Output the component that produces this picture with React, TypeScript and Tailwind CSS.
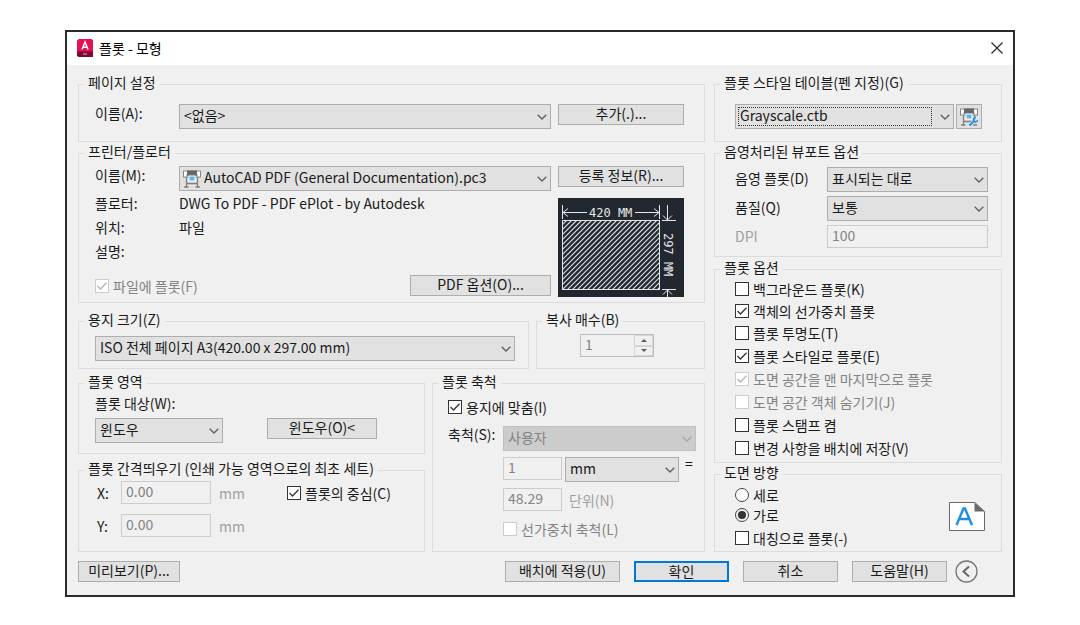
import { useState } from "react";
import type { ReactNode } from "react";
import clsx from "clsx";

type SelectProps = {
  id?: string;
  label?: string;
  options: string[];
  className?: string;
  disabled?: boolean;
  focused?: boolean;
  icon?: ReactNode;
};

const Chevron = ({ className }: { className: string }) => (
  <svg viewBox="0 0 10 6" className={className} fill="none" aria-hidden="true">
    <path d="M0.7 0.7 L5 5 L9.3 0.7" stroke="currentColor" strokeWidth="1.3" />
  </svg>
);

const PlotterIcon = ({ wrench = false }: { wrench?: boolean }) => (
  <svg viewBox="0 0 18 18" className="h-[18px] w-[18px]" fill="none" aria-hidden="true">
    <rect x="0.5" y="1" width="17" height="6" fill="#fff" stroke="#858585" />
    <rect x="4" y="0.5" width="10" height="4.500" fill="#666" />
    <path d="M3.500 5.500h11" stroke="#777" strokeWidth="1.600" />
    <path d="M3.500 7v10M14.500 7v10M1 17h4.500M12.500 17h4.500M3.500 13.500h11" stroke="#808080" strokeWidth="1.300" />
    <rect x="6" y="6" width="6" height="5" fill="#5ab4f0" stroke="#fff" />
    {wrench && (
      <>
        <path d="M10 17.500l5-5" stroke="#e1e1e1" strokeWidth="4" />
        <path d="M9.500 17.500l5-5" stroke="#2b93e6" strokeWidth="2.200" />
        <path d="M16 9.500a2.200 2.200 0 1 0 1.800 2.500" stroke="#2b93e6" strokeWidth="1.600" />
      </>
    )}
  </svg>
);

const Select = ({ id, label, options, className, disabled, focused, icon }: SelectProps) => (
  <div className={clsx("relative", className)}>
    <select
      id={id}
      aria-label={label}
      disabled={disabled}
      className={clsx(
        "block h-[25px] w-full appearance-none truncate border pr-6 pb-1 leading-5 outline-none",
        icon ? "pl-6" : "pl-1",
        disabled
          ? "border-[#bfbfbf] bg-[#cccccc] text-[#838383] opacity-100"
          : "border-[#adadad] bg-[#e1e1e1] text-[#1a1a1a]"
      )}
    >
      {options.map((option) => (
        <option key={option}>{option}</option>
      ))}
    </select>
    {icon && <span className="pointer-events-none absolute top-1 left-1">{icon}</span>}
    {focused && (
      <span className="pointer-events-none absolute top-[3px] right-[22px] bottom-[3px] left-[3px] border border-dotted border-[#333]" />
    )}
    <Chevron
      className={clsx(
        "pointer-events-none absolute top-[10px] right-1 h-[6px] w-[10px]",
        disabled ? "text-[#a5a5a5]" : "text-[#606060]"
      )}
    />
  </div>
);

const Button = ({ children, className, primary }: { children: ReactNode; className?: string; primary?: boolean }) => (
  <button
    type="button"
    className={clsx(
      "h-[21px] shrink-0 bg-[#e1e1e1] pb-1 text-center leading-4 whitespace-nowrap hover:bg-[#e5f1fb]",
      primary ? "border-2 border-[#0078d7]" : "border border-[#adadad]",
      className
    )}
  >
    {children}
  </button>
);

const Group = ({ title, className, children }: { title: string; className?: string; children: ReactNode }) => (
  <fieldset className={clsx("min-w-0 border border-[#dcdcdc]", className)}>
    <legend className="ml-[5px] px-1 pb-1 leading-3">{title}</legend>
    {children}
  </fieldset>
);

const Check = ({ label, checked = false, disabled = false }: { label: string; checked?: boolean; disabled?: boolean }) => {
  const [on, setOn] = useState(checked);

  return (
    <label className={clsx("flex items-center gap-1 leading-5 whitespace-nowrap", disabled && "text-[#838383]")}>
      <span className="grid h-[14px] w-[14px] shrink-0">
        <input
          type="checkbox"
          checked={on}
          disabled={disabled}
          onChange={(event) => setOn(event.target.checked)}
          className="col-start-1 row-start-1 h-[14px] w-[14px] appearance-none border border-[#333] bg-white disabled:border-[#cccccc]"
        />
        {on && (
          <svg
            viewBox="0 0 14 14"
            className={clsx(
              "pointer-events-none col-start-1 row-start-1 h-[14px] w-[14px]",
              disabled ? "text-[#b5b5b5]" : "text-[#333]"
            )}
            fill="none"
            aria-hidden="true"
          >
            <path d="M2.5 7 L5.5 10 L11.5 3.8" stroke="currentColor" strokeWidth="1.3" />
          </svg>
        )}
      </span>
      {label}
    </label>
  );
};

const Radio = ({ label, defaultChecked }: { label: string; defaultChecked?: boolean }) => (
  <label className="flex h-5 items-center gap-1 leading-5">
    <input
      type="radio"
      name="orientation"
      defaultChecked={defaultChecked}
      className="h-[14px] w-[14px] appearance-none rounded-full border border-[#444] bg-white p-[2px] checked:bg-[#333] checked:bg-clip-content"
    />
    {label}
  </label>
);

const Field = ({ id, label, value, className }: { id?: string; label?: string; value: string; className?: string }) => (
  <input
    id={id}
    aria-label={label}
    type="text"
    defaultValue={value}
    disabled
    className={clsx("h-[23px] min-w-0 border border-[#cccccc] bg-[#f0f0f0] px-1 pb-1 leading-4 text-[#838383]", className)}
  />
);

const hatch = Array.from({ length: 34 }, (_, i) => (i + 1) * 5);

const PaperPreview = () => (
  <svg
    viewBox="0 0 126 99"
    className="h-[99px] w-[126px] shrink-0 bg-[#212830]"
    fill="none"
    stroke="#e6e6e6"
    role="img"
    aria-label="420 x 297 MM"
  >
    <defs>
      <clipPath id="sheet">
        <rect x="5" y="22" width="96" height="69" />
      </clipPath>
    </defs>
    <rect x="4.5" y="22.5" width="97" height="69" />
    <g clipPath="url(#sheet)" strokeWidth="1.1">
      {hatch.map((offset) => (
        <path key={offset} d={`M${4 + offset} 22 L${4 + offset - 70} 92`} />
      ))}
    </g>
    <path d="M4.5 7v14M101.5 7v14M5 14.500h24M77 14.500h24M10 10.500l-5 4 5 4M96 10.500l5 4-5 4" />
    <path d="M109.500 7v15M104 22.500h14M105 17.500l4.500 4.500 4.500-4.500" />
    <path d="M104 91.500h14M109.500 92v7M105 96.500l4.500-4.500 4.500 4.500" />
    <g fill="#e6e6e6" stroke="none" className="font-['DejaVu_Sans_Mono',monospace] text-[12px]">
      <text x="31" y="19">420 MM</text>
      <text transform="translate(106 35) rotate(90)">297 MM</text>
    </g>
  </svg>
);

const plotOptions = [
  { label: "백그라운드 플롯(K)" },
  { label: "객체의 선가중치 플롯", checked: true },
  { label: "플롯 투명도(T)" },
  { label: "플롯 스타일로 플롯(E)", checked: true },
  { label: "도면 공간을 맨 마지막으로 플롯", checked: true, disabled: true },
  { label: "도면 공간 객체 숨기기(J)", disabled: true },
  { label: "플롯 스탬프 켬" },
  { label: "변경 사항을 배치에 저장(V)" },
];

const TitleBar = () => (
  <header className="flex h-[33px] items-center bg-white pr-[10px] pb-[2px] pl-[10px]">
    <svg viewBox="0 0 16 18" className="h-[18px] w-4" aria-hidden="true">
      <path d="M0 1.500L2 0h12.500L16 1.500V18H1.500L0 16.500z" fill="#e51050" />
      <path d="M0 12.500h16V18H1.500L0 16.500z" fill="#7d0a35" />
      <path d="M5 10.500L8 3l3 7.500M6.200 8.200h3.600" fill="none" stroke="#fff" strokeWidth="1.5" />
      <path d="M6 15h4" stroke="#e8b7c6" strokeWidth="1" />
    </svg>
    <h1 className="ml-[6px] text-[14px] leading-5 text-black">플롯 - 모형</h1>
    <button type="button" aria-label="닫기" className="ml-auto">
      <svg viewBox="0 0 12 12" className="h-3 w-3" fill="none" aria-hidden="true">
        <path d="M0.5 0.500l11 11M11.500 0.500l-11 11" stroke="#222" strokeWidth="1.1" />
      </svg>
    </button>
  </header>
);

const PageSetup = () => (
  <Group title="페이지 설정">
    <div className="flex items-start gap-[7px] py-3 pr-5 pl-4">
      <div className="flex flex-1">
        <label htmlFor="page-name" className="w-[84px] shrink-0 leading-[18px]">
          이름(A):
        </label>
        <Select id="page-name" options={["<없음>"]} className="flex-1" />
      </div>
      <Button className="w-[126px]">추가(.)...</Button>
    </div>
  </Group>
);

const Printer = () => (
  <Group title="프린터/플로터" className="mt-[3px]">
    <div className="pt-[5px] pr-5 pb-[5px] pl-4">
      <div className="flex items-start gap-[7px]">
        <div className="flex flex-1">
          <label htmlFor="printer-name" className="w-[84px] shrink-0 leading-[18px]">
            이름(M):
          </label>
          <Select
            id="printer-name"
            options={["AutoCAD PDF (General Documentation).pc3"]}
            icon={<PlotterIcon />}
            className="flex-1"
          />
        </div>
        <Button className="w-[126px]">등록 정보(R)...</Button>
      </div>
      <div className="flex items-end gap-[7px]">
        <div className="flex-1">
          <dl className="grid grid-cols-[84px_1fr] pb-px leading-6">
            <dt>플로터:</dt>
            <dd>DWG To PDF - PDF ePlot - by Autodesk</dd>
            <dt>위치:</dt>
            <dd>파일</dd>
            <dt>설명:</dt>
            <dd />
          </dl>
          <div className="mt-[11px] mb-px flex items-center justify-between">
            <Check label="파일에 플롯(F)" checked disabled />
            <Button className="w-[141px]">PDF 옵션(O)...</Button>
          </div>
        </div>
        <div className="mt-[7px]">
          <PaperPreview />
        </div>
      </div>
    </div>
  </Group>
);

const PaperAndCopies = () => (
  <div className="mt-[10px] flex gap-[7px]">
    <Group title="용지 크기(Z)" className="flex-1">
      <div className="py-[7px] pr-[13px] pl-4">
        <Select label="용지 크기" options={["ISO 전체 페이지 A3(420.00 x 297.00 mm)"]} />
      </div>
    </Group>
    <Group title="복사 매수(B)" className="w-[169px]">
      <div className="flex pt-[5px] pl-[43px]">
        <div className="flex h-[23px] w-[74px] border border-[#bcbcc4]">
          <input
            type="text"
            aria-label="복사 매수"
            defaultValue="1"
            disabled
            className="w-[53px] px-1 pb-1 leading-4 text-[#838383]"
          />
          <div className="flex flex-1 flex-col text-[#606060]">
            <button type="button" disabled aria-label="늘리기" className="grid flex-1 place-items-center border border-[#d5d5d5]">
              <svg viewBox="0 0 6 3" className="h-[3px] w-[6px]" aria-hidden="true">
                <path d="M0 3l3-3 3 3z" fill="currentColor" />
              </svg>
            </button>
            <button type="button" disabled aria-label="줄이기" className="grid flex-1 place-items-center border border-[#d5d5d5]">
              <svg viewBox="0 0 6 3" className="h-[3px] w-[6px]" aria-hidden="true">
                <path d="M0 0l3 3 3-3z" fill="currentColor" />
              </svg>
            </button>
          </div>
        </div>
      </div>
    </Group>
  </div>
);

const PlotArea = () => (
  <Group title="플롯 영역">
    <div className="pt-[3px] pb-[10px] pl-4">
      <label htmlFor="plot-target" className="block leading-[18px]">
        플롯 대상(W):
      </label>
      <div className="mt-[6px] flex items-start gap-[44px]">
        <Select id="plot-target" options={["윈도우"]} className="w-[128px]" />
        <Button className="w-[110px]">윈도우(O)&lt;</Button>
      </div>
    </div>
  </Group>
);

const PlotOffset = () => (
  <Group title="플롯 간격띄우기 (인쇄 가능 영역으로의 최초 세트)" className="mt-2">
    <div className="flex flex-col gap-[10px] pt-[3px] pb-[14px] pl-[18px]">
      <div className="flex items-center">
        <label htmlFor="offset-x" className="w-6">
          X:
        </label>
        <Field id="offset-x" value="0.00" className="w-[90px]" />
        <span className="ml-2 w-[68px] text-[#a0a0a0]">mm</span>
        <Check label="플롯의 중심(C)" checked />
      </div>
      <div className="flex items-center">
        <label htmlFor="offset-y" className="w-6">
          Y:
        </label>
        <Field id="offset-y" value="0.00" className="w-[90px]" />
        <span className="ml-2 text-[#a0a0a0]">mm</span>
      </div>
    </div>
  </Group>
);

const PlotScale = () => (
  <Group title="플롯 축척" className="w-[273px]">
    <div className="pt-[6px] pr-2 pb-3 pl-[15px]">
      <Check label="용지에 맞춤(I)" checked />
      <div className="mt-[9px] grid grid-cols-[55px_1fr] gap-y-[6px]">
        <label htmlFor="scale" className="leading-4">
          축척(S):
        </label>
        <Select id="scale" options={["사용자"]} disabled />
        <div className="col-start-2 flex items-start">
          <Field label="축척 값" value="1" className="w-[59px]" />
          <Select label="축척 단위" options={["mm"]} className="ml-[3px] w-[114px]" />
          <span className="ml-[6px] leading-3">=</span>
        </div>
        <div className="col-start-2 flex items-center">
          <Field id="units" value="48.29" className="w-[59px]" />
          <label htmlFor="units" className="ml-[7px] text-[#a0a0a0]">
            단위(N)
          </label>
        </div>
        <div className="col-start-2 mt-[2px]">
          <Check label="선가중치 축척(L)" disabled />
        </div>
      </div>
    </div>
  </Group>
);

const StyleTable = () => (
  <Group title="플롯 스타일 테이블(펜 지정)(G)">
    <div className="flex gap-[2px] py-3 pr-[19px] pl-5">
      <Select label="플롯 스타일 테이블" options={["Grayscale.ctb"]} focused className="flex-1" />
      <button
        type="button"
        aria-label="편집"
        className="grid h-[25px] w-[26px] place-items-center border border-[#adadad] bg-[#e1e1e1]"
      >
        <PlotterIcon wrench />
      </button>
    </div>
  </Group>
);

const ShadedViewport = () => (
  <Group title="음영처리된 뷰포트 옵션" className="mt-[3px]">
    <div className="grid grid-cols-[92px_1fr] gap-y-1 pt-[6px] pr-[13px] pb-2 pl-5 leading-[22px]">
      <label htmlFor="shade">음영 플롯(D)</label>
      <Select id="shade" options={["표시되는 대로"]} />
      <label htmlFor="quality">품질(Q)</label>
      <Select id="quality" options={["보통"]} />
      <label htmlFor="dpi" className="text-[#a0a0a0]">
        DPI
      </label>
      <Field id="dpi" value="100" />
    </div>
  </Group>
);

const Orientation = () => (
  <Group title="도면 방향" className="mt-[3px]">
    <div className="flex items-center justify-between py-[3px] pr-4 pl-5">
      <div>
        <Radio label="세로" />
        <Radio label="가로" defaultChecked />
        <div className="mt-[3px]">
          <Check label="대칭으로 플롯(-)" />
        </div>
      </div>
      <svg viewBox="0 0 36 29" className="h-[29px] w-9" fill="none" aria-hidden="true">
        <path d="M0.500 0.500H26L35.500 9.500V28.500H0.500z" fill="#fff" stroke="#6a6a6a" />
        <path d="M25.500 0.500V9.500H35.500z" fill="#6a6a6a" />
        <path d="M7.500 23L14.500 6.500h1.500L23 23M10 17h10.500" stroke="#1e8fe6" strokeWidth="2.4" />
      </svg>
    </div>
  </Group>
);

const Footer = () => (
  <footer className="mt-2 flex items-center pr-6">
    <Button className="w-[102px]">미리보기(P)...</Button>
    <div className="ml-auto flex items-center gap-[14px]">
      <Button className="w-[115px]">배치에 적용(U)</Button>
      <Button primary className="w-[95px]">
        확인
      </Button>
      <Button className="w-[95px]">취소</Button>
      <Button className="w-[95px]">도움말(H)</Button>
    </div>
    <button type="button" aria-label="간단히" className="ml-2">
      <svg viewBox="0 0 23 23" className="h-[23px] w-[23px]" fill="none" aria-hidden="true">
        <circle cx="11.500" cy="11.500" r="10.500" stroke="#777" strokeWidth="1.3" />
        <path d="M14 6.500l-5.500 5 5.500 5" stroke="#666" strokeWidth="2" />
      </svg>
    </button>
  </footer>
);

const App = () => (
  <main className="min-h-screen bg-white px-[65px] pt-[30px] font-['Noto_Sans_CJK_KR',sans-serif] text-[14px] leading-5 text-[#1a1a1a]">
    <div className="border-2 border-[#2b2b2d] bg-[#f0f0f0]">
      <TitleBar />
      <form className="px-[11px] pt-[11px] pb-3">
        <div className="flex gap-[9px]">
          <div className="min-w-0 flex-1">
            <PageSetup />
            <Printer />
            <PaperAndCopies />
            <div className="mt-[6px] flex gap-[7px]">
              <div className="min-w-0 flex-1">
                <PlotArea />
                <PlotOffset />
              </div>
              <PlotScale />
            </div>
          </div>
          <div className="w-[288px] shrink-0">
            <StyleTable />
            <ShadedViewport />
            <Group title="플롯 옵션" className="mt-1">
              <div className="grid grid-rows-[repeat(3,22px)_repeat(5,23px)] pt-px pb-[3px] pl-5">
                {plotOptions.map((option) => (
                  <Check key={option.label} {...option} />
                ))}
              </div>
            </Group>
            <Orientation />
          </div>
        </div>
        <Footer />
      </form>
    </div>
  </main>
);

export default App;
